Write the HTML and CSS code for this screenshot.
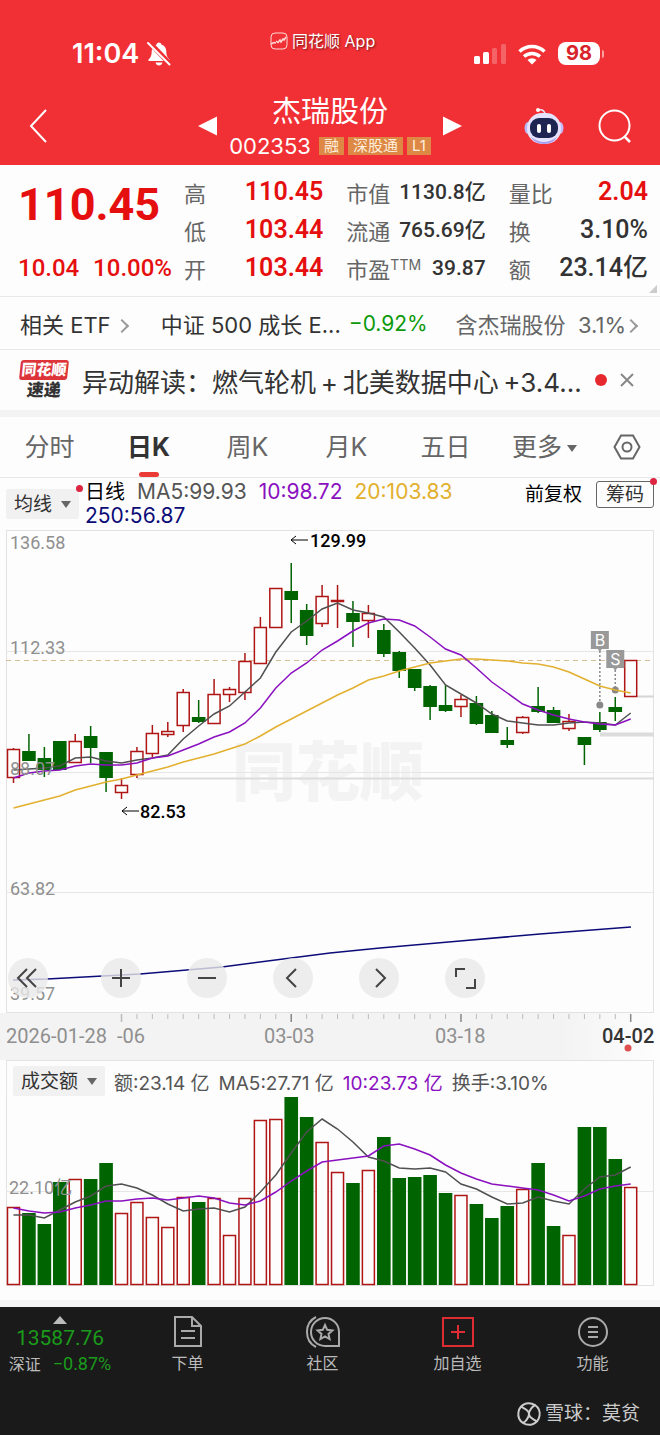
FILE: index.html
```
<!DOCTYPE html>
<html lang="zh-CN">

<head>
  <meta charset="UTF-8" />
  <meta name="viewport" content="width=device-width, initial-scale=1.0">
  <title>杰瑞股份 002353</title>
  <link rel="stylesheet" href="styles.css">
</head>

<body>
  <header class="header">
    <div class="status-bar">
      <div class="clock">
        <span>11:04</span>
        <svg width="24" height="26" viewBox="0 0 24 26">
          <path d="M12 1.500c-1.300 0-2.200.8-2.400 2C6.500 4.500 4.700 7 4.700 10.500c0 4-1 6-3.200 8.100V20h21v-1.400c-2.200-2.100-3.200-4.100-3.200-8.100 0-3.500-1.800-6-4.900-7-.2-1.200-1.100-2-2.400-2zM8.500 21.500h7c-.5 1.800-1.800 3-3.500 3s-3-1.200-3.500-3z" fill="#fff" />
          <path d="M2 1l21 22" stroke="#f13035" stroke-width="5" />
          <path d="M1 2l21.500 21.500" stroke="#fff" stroke-width="2" stroke-linecap="round" />
        </svg>
      </div>
      <div class="app-name">
        <svg width="18" height="18" viewBox="0 0 18 18" fill="none" stroke="#ffd9d6">
          <rect x="1" y="1" width="16" height="16" rx="4" />
          <path d="M1 12l3-1.500 2 .5M6 9l2 1.500L10 8l1 2 2-3 1 1 2-3" stroke-width="1.500" />
        </svg>
        <span>同花顺 App</span>
      </div>
      <div class="signals">
        <svg width="32" height="22" viewBox="0 0 32 22" fill="#fff">
          <rect x="0" y="13" width="6" height="8" rx="1.500" />
          <rect x="9" y="9" width="6" height="12" rx="1.500" />
          <rect x="18" y="5" width="5" height="16" rx="1.500" opacity=".25" />
          <rect x="27" y="1" width="5" height="20" rx="1.500" opacity=".25" />
        </svg>
        <svg width="28" height="22" viewBox="0 0 28 22" fill="none" stroke="#fff" stroke-width="3.500">
          <path d="M1.500 8.500a18 18 0 0 1 25 0" />
          <path d="M6 13.500a12 12 0 0 1 16 0" />
          <path d="M14 21.500l-4.500-4.500a6.500 6.500 0 0 1 9 0z" fill="#fff" stroke="none" />
        </svg>
        <span class="battery">98</span>
      </div>
    </div>
    <div class="title-bar">
      <a class="back" href="#" aria-label="返回">
        <svg width="20" height="34" viewBox="0 0 20 34" fill="none" stroke="#fff" stroke-width="2">
          <path d="M18 1L3 17l15 16" />
        </svg>
      </a>
      <div class="stock">
        <button class="arrow" aria-label="上一只">
          <svg width="19" height="20" viewBox="0 0 20 20"><path d="M20 0v20L0 10z" fill="#fff" /></svg>
        </button>
        <div class="stock-name">
          <h1>杰瑞股份</h1>
          <p><span class="code">002353</span><span class="tag">融</span><span class="tag">深股通</span><span class="tag">L1</span></p>
        </div>
        <button class="arrow" aria-label="下一只">
          <svg width="19" height="20" viewBox="0 0 20 20"><path d="M0 0v20l20-10z" fill="#fff" /></svg>
        </button>
      </div>
      <div class="actions">
        <button aria-label="智能助手">
          <svg width="40" height="38" viewBox="0 0 40 38">
            <path d="M15 3q5-1 6 4" fill="none" stroke="#e8e6fb" stroke-width="1.500" />
            <circle cx="14" cy="3" r="2" fill="#fff" />
            <ellipse cx="4" cy="21" rx="3.500" ry="6" fill="#b9b6f5" />
            <ellipse cx="36" cy="21" rx="3.500" ry="6" fill="#c9b8f8" />
            <rect x="3" y="6" width="34" height="31" rx="15" fill="#e4e2fc" />
            <path d="M7 30q13 10 26 0-4 7-13 7T7 30z" fill="#a99cf0" />
            <rect x="6" y="11" width="28" height="20" rx="9" fill="#1d2550" />
            <rect x="13" y="17" width="4" height="9" rx="2" fill="#fff" />
            <rect x="23" y="17" width="4" height="9" rx="2" fill="#fff" />
          </svg>
        </button>
        <button aria-label="搜索">
          <svg width="34" height="34" viewBox="0 0 34 34" fill="none" stroke="#fff" stroke-width="2">
            <circle cx="16.500" cy="16.500" r="15" />
            <path d="M26 27l6 6" stroke-width="2.500" />
          </svg>
        </button>
      </div>
    </div>
  </header>

  <section class="quote">
    <div class="price">
      <strong>110.45</strong>
      <p><span>10.04</span><span>10.00%</span></p>
    </div>
    <dl class="facts">
      <div><dt>高</dt><dd class="up">110.45</dd></div>
      <div><dt>市值</dt><dd class="small">1130.8亿</dd></div>
      <div><dt>量比</dt><dd class="up">2.04</dd></div>
      <div><dt>低</dt><dd class="up">103.44</dd></div>
      <div><dt>流通</dt><dd class="small">765.69亿</dd></div>
      <div><dt>换</dt><dd>3.10%</dd></div>
      <div><dt>开</dt><dd class="up">103.44</dd></div>
      <div><dt>市盈<sup>TTM</sup></dt><dd class="small">39.87</dd></div>
      <div><dt>额</dt><dd>23.14亿</dd></div>
    </dl>
    <i class="corner"></i>
  </section>

  <section class="etf">
    <a href="#">相关 ETF <i class="chevron"></i></a>
    <span class="etf-name">中证 500 成长 E...</span>
    <span class="down">−0.92%</span>
    <a class="muted" href="#">含杰瑞股份&nbsp; 3.1%<i class="chevron"></i></a>
  </section>

  <section class="news">
    <div class="news-logo"><b>同花顺</b><em>速递</em></div>
    <a href="#">异动解读：燃气轮机&thinsp;+&thinsp;北美数据中心&thinsp;+3.4...</a>
    <span class="dot"></span>
    <button aria-label="关闭">
      <svg width="14" height="14" viewBox="0 0 14 14" stroke="#888" stroke-width="2"><path d="M1 1l12 12M13 1L1 13" /></svg>
    </button>
  </section>

  <nav class="tabs">
    <a href="#">分时</a>
    <a href="#" class="active">日K</a>
    <a href="#">周K</a>
    <a href="#">月K</a>
    <a href="#">五日</a>
    <a href="#">更多<i class="caret"></i></a>
    <button aria-label="设置">
      <svg width="28" height="26" viewBox="0 0 28 26" fill="none" stroke="#666" stroke-width="2">
        <path d="M8 1.500h12L26.500 13 20 24.500H8L1.500 13z" />
        <circle cx="14" cy="13" r="4.500" />
      </svg>
    </button>
  </nav>

  <section class="ma-bar">
    <div class="picker has-dot">
      <select aria-label="主图指标"><option>均线</option></select><i class="caret"></i>
    </div>
    <p class="ma-values">
      <span class="period">日线</span>
      <span class="ma5">MA5:99.93</span>
      <span class="ma10">10:98.72</span>
      <span class="ma20">20:103.83</span>
      <span class="ma250">250:56.87</span>
    </p>
    <span class="adjust">前复权</span>
    <button class="chips">筹码</button>
  </section>

  <section class="kline">
    <svg id="kline" viewBox="0 0 660 483"></svg>
    <div class="tools">
      <button aria-label="最早"><svg viewBox="0 0 40 40"><path d="M19 11l-9 9 9 9M28 11l-9 9 9 9" /></svg></button>
      <button aria-label="放大"><svg viewBox="0 0 40 40"><path d="M20 11v18M11 20h18" /></svg></button>
      <button aria-label="缩小"><svg viewBox="0 0 40 40"><path d="M11 20h18" /></svg></button>
      <button aria-label="左移"><svg viewBox="0 0 40 40"><path d="M23 11l-9 9 9 9" /></svg></button>
      <button aria-label="右移"><svg viewBox="0 0 40 40"><path d="M17 11l9 9-9 9" /></svg></button>
      <button aria-label="全屏"><svg viewBox="0 0 40 40"><path d="M11 19v-8h9M30 21v9h-9" /></svg></button>
    </div>
  </section>
  <svg id="axis" class="axis" viewBox="0 0 660 47"></svg>

  <section class="volume">
    <div class="volume-bar">
      <div class="picker">
        <select aria-label="副图指标"><option>成交额</option></select><i class="caret"></i>
      </div>
      <span>额:23.14 亿</span>
      <span>MA5:27.71 亿</span>
      <span class="ma10">10:23.73 亿</span>
      <span>换手:3.10%</span>
    </div>
    <svg id="volume" viewBox="0 0 660 190"></svg>
  </section>

  <footer class="footer">
    <div class="menu">
      <a class="index" href="#">
        <i class="caret-up"></i>
        <b>13587.76</b>
        <span>深证<em>−0.87%</em></span>
      </a>
      <a href="#">
        <svg width="30" height="32" viewBox="0 0 30 32"><path d="M2 1h17l9 9v20H2zM19 1v9h9M8 15h14M8 22h14" /></svg>
        下单
      </a>
      <a href="#">
        <svg width="34" height="32" viewBox="0 0 34 32">
          <path d="M19 2a14 14 0 0 0 0 28h14V16A14 14 0 0 0 19 2zM10 1C-2 7-2 25 10 31" />
          <path d="M19 9l2.200 4.800 5.200.6-3.900 3.500 1.100 5.200-4.600-2.700-4.600 2.700 1.100-5.200-3.900-3.500 5.200-.6z" />
        </svg>
        社区
      </a>
      <a href="#">
        <svg class="add" width="32" height="32" viewBox="0 0 32 32"><path d="M1 2h30v28H1zM16 9v14M9 16h14" /></svg>
        加自选
      </a>
      <a href="#">
        <svg width="30" height="32" viewBox="0 0 30 32"><circle cx="15" cy="16" r="14" /><path d="M10 11h10M10 16h10M10 21h10" /></svg>
        功能
      </a>
    </div>
    <p class="credit">
      <svg width="24" height="24" viewBox="0 0 24 24" fill="none" stroke="#ccc" stroke-width="2">
        <path d="M9 1.500a11 11 0 0 0-3 19.500c2-1 6-5 6-9S7 7 5 5M15 22.500A11 11 0 0 0 18 3c-2 1-6 5-6 9s5 5 7 7" />
        <path d="M9 1.500q5-1 9 1.500M6 21q4 2.500 9 1.500" />
      </svg>
      雪球：莫贫
    </p>
  </footer>
  <script src="chart.js"></script>
</body>

</html>
```

FILE: styles.css
```
* {
  box-sizing: border-box;
  margin: 0;
  padding: 0;
}

body {
  font-family: Inter, 'Noto Sans CJK SC', sans-serif;
  background-color: #fdfdfd;
  color: #333;
  font-size: 20px;
}

a {
  color: inherit;
  text-decoration: none;
}

button {
  background: none;
  border: none;
  font: inherit;
  color: inherit;
  cursor: pointer;
}

svg {
  display: block;
  overflow: visible;
}

i,
em {
  font-style: normal;
}

/* Header */
.header {
  background: #f13035;
  color: #fff;
  height: 165px;
}

.status-bar {
  display: flex;
  justify-content: space-between;
  align-items: flex-start;
  height: 92px;
  padding: 28px 60px 0 72px;
}

.clock {
  display: flex;
  align-items: center;
  gap: 8px;
  margin-top: 12px;
  font-size: 27px;
  line-height: 28px;
  font-weight: 600;
}

.app-name {
  display: flex;
  align-items: center;
  gap: 4px;
  font-size: 16px;
  line-height: 26px;
  text-shadow: 1px 1px 2px rgba(0, 0, 0, 0.5);
}

.signals {
  display: flex;
  align-items: center;
  gap: 12px;
  margin-top: 14px;
}

.battery {
  position: relative;
  width: 42px;
  background: #fff;
  color: #d8232a;
  border-radius: 8px;
  font-size: 20px;
  line-height: 23px;
  font-weight: 700;
  text-align: center;
}

.battery::after {
  content: '';
  position: absolute;
  top: 8px;
  right: -4px;
  width: 2px;
  height: 8px;
  border-radius: 0 3px 3px 0;
  background: #f9a0a0;
}

.title-bar {
  display: grid;
  grid-template-columns: 1fr auto 1fr;
  align-items: center;
  padding: 0 28px;
}

.stock {
  display: flex;
  align-items: center;
  gap: 12px;
}

.stock-name {
  text-align: center;
}

.stock-name h1 {
  font-size: 29px;
  line-height: 40px;
  font-weight: 400;
}

.stock-name p {
  display: flex;
  align-items: center;
  gap: 4px;
}

.code {
  margin-right: 4px;
  font-size: 22px;
  line-height: 28px;
}

.tag {
  padding: 0 5px;
  background: #dd8844;
  color: #ffeedd;
  font-size: 15px;
  line-height: 18px;
}

.actions {
  display: flex;
  justify-content: flex-end;
  align-items: center;
  gap: 34px;
}

/* Quote */
.quote {
  position: relative;
  display: flex;
  gap: 12px;
  height: 132px;
  padding: 8px 12px 0 18px;
  border-bottom: 1px solid #e8e8e8;
  font-family: Roboto, 'Noto Sans CJK SC', sans-serif;
}

.corner {
  position: absolute;
  right: 3px;
  bottom: 3px;
  border: 4px solid transparent;
  border-right-color: #ccc;
  border-bottom-color: #ccc;
}

.price {
  flex: 154;
  color: #e60f0f;
}

.price strong {
  display: block;
  font-size: 45px;
  line-height: 64px;
}

.price p {
  display: flex;
  justify-content: space-between;
  margin-top: 12px;
  font-size: 24px;
  line-height: 38px;
  font-weight: 500;
}

.facts {
  flex: 464;
  display: grid;
  grid-template-columns: repeat(3, minmax(0, 1fr));
  column-gap: 23px;
  grid-auto-rows: 38px;
}

.facts div {
  display: flex;
  justify-content: space-between;
  align-items: center;
  white-space: nowrap;
}

.facts dt {
  font-size: 22px;
  color: #666;
}

.facts sup {
  font-family: Inter, sans-serif;
  font-size: 14px;
}

.facts dd {
  font-size: 25px;
  line-height: 38px;
  font-weight: 500;
}

.facts .small {
  font-size: 21px;
}

.facts .up {
  font-weight: 600;
}

.up {
  color: #e60f0f;
}

.down {
  color: #0c9a0c;
}

/* ETF and news rows */
.etf {
  display: flex;
  align-items: center;
  height: 53px;
  padding: 0 20px;
  border-bottom: 1px solid #e8e8e8;
  font-size: 22px;
  white-space: nowrap;
}

.etf-name {
  margin-left: 30px;
}

.etf .down {
  margin-left: 8px;
  font-size: 21px;
}

.muted {
  margin-left: auto;
  color: #666;
}

.chevron {
  display: inline-block;
  width: 10px;
  height: 10px;
  margin: 0 4px 2px 0;
  border: solid #999;
  border-width: 2px 2px 0 0;
  transform: rotate(45deg);
}

.news {
  display: flex;
  align-items: center;
  height: 67px;
  padding: 0 26px 0 20px;
  border-bottom: 7px solid #f3f3f3;
  font-size: 26px;
  white-space: nowrap;
}

.news-logo {
  width: 48px;
  margin-right: 14px;
  text-align: center;
  font-size: 15px;
  line-height: 20px;
  font-weight: 900;
}

.news-logo b {
  display: block;
  background: #dd343a;
  border-radius: 3px;
  color: #fff;
  transform: skewX(-6deg);
}

.news-logo em {
  display: block;
  font-size: 17px;
  transform: skewX(-6deg);
}

.news a {
  flex: 1;
}

.dot {
  width: 12px;
  height: 12px;
  margin-right: 13px;
  border-radius: 50%;
  background: #e5292f;
}

/* Tabs */
.tabs {
  display: grid;
  grid-template-columns: repeat(6, 3fr) 2fr;
  height: 61px;
  border-bottom: 1px solid #e8e8e8;
  color: #666;
  font-size: 25px;
  line-height: 60px;
  text-align: center;
}

.tabs a {
  position: relative;
}

.tabs button {
  display: flex;
  align-items: center;
  justify-content: center;
}

.tabs .active {
  color: #333;
  font-weight: 700;
}

.tabs .active::after {
  content: '';
  position: absolute;
  left: 50%;
  bottom: 0;
  width: 20px;
  height: 5px;
  margin-left: -10px;
  border-radius: 3px;
  background: #ea3b36;
}

.caret {
  display: inline-block;
  border: 5px solid transparent;
  border-top: 7px solid #666;
  border-bottom: none;
}

.tabs .caret {
  margin: 0 0 4px 5px;
}

/* Moving average legend */
.ma-bar {
  display: flex;
  align-items: flex-start;
  height: 52px;
  padding: 0 6px;
}

.picker {
  position: relative;
  display: flex;
  align-items: center;
  gap: 8px;
  height: 30px;
  padding: 0 8px;
  background: #f1f1f1;
  border-radius: 2px;
}

.picker select {
  appearance: none;
  background: none;
  border: none;
  color: #333;
  font: inherit;
  font-size: 19px;
}

.ma-bar .picker {
  margin-top: 11px;
}

.has-dot::after,
.chips::after {
  content: '';
  position: absolute;
  top: -4px;
  right: -4px;
  width: 7px;
  height: 7px;
  border-radius: 50%;
  background: #dc2540;
}

.ma-values {
  flex: 1;
  margin: 2px 0 0 6px;
  font-size: 21px;
  line-height: 24px;
  display: flex;
  flex-wrap: wrap;
  column-gap: 12px;
}

.period {
  color: #000;
  font-size: 20px;
}

.ma5 {
  color: #555;
}

.ma10 {
  color: #8a10c0;
}

.ma20 {
  color: #e2b02e;
}

.ma250 {
  color: #0c0c78;
}

.adjust {
  margin: 3px 14px 0 0;
  color: #000;
  font-size: 19px;
  line-height: 28px;
}

.chips {
  position: relative;
  height: 27px;
  margin-top: 3px;
  padding: 0 9px;
  border: 1px solid #666;
  border-radius: 3px;
  font-size: 19px;
  line-height: 24px;
}

/* Charts */
.kline {
  position: relative;
}

.kline text,
.axis text,
.volume text {
  font-family: Roboto, 'Noto Sans CJK SC', sans-serif;
  font-size: 18px;
  fill: #8f8f8f;
}

.kline .mark {
  fill: #000;
  font-weight: 500;
}

.kline .watermark {
  font-size: 64px;
  font-weight: 900;
  fill: #f3f3f3;
}

.kline .flag {
  font-family: Inter, sans-serif;
  font-size: 16px;
  fill: #fff;
}

.axis text {
  font-size: 20px;
}

.axis .last {
  fill: #333;
  font-weight: 500;
}

.axis {
  background: linear-gradient(to right, #f3f3f3 85%, #fdfdfd);
}

.tools {
  position: absolute;
  left: 8px;
  bottom: 15px;
  display: flex;
  gap: 46px;
}

.tools button {
  width: 40px;
  height: 40px;
  border-radius: 50%;
  background: rgba(232, 232, 232, 0.8);
}

.tools button:first-child {
  margin-right: 7px;
}

.tools path {
  fill: none;
  stroke: #444;
  stroke-width: 2;
}

/* Volume */
.volume {
  border-bottom: 7px solid #f3f3f3;
  padding-bottom: 14px;
}

.volume-bar {
  display: flex;
  align-items: center;
  gap: 9px;
  height: 36px;
  margin: 0 6px;
  padding: 5px 6px 0;
  border: 1px solid #e4e4e4;
  border-bottom: none;
  color: #555;
  font-size: 19px;
  white-space: nowrap;
}

.volume-bar .ma10 {
  color: #8a10c0;
}

/* Footer */
.footer {
  height: 128px;
  background: #1a1a1a;
  color: #bbb;
}

.menu {
  display: grid;
  grid-template-columns: 8fr repeat(4, 9fr);
  padding-top: 9px;
  font-size: 16px;
  line-height: 24px;
}

.menu a {
  display: flex;
  flex-direction: column;
  align-items: center;
  gap: 3px;
}

.menu svg {
  fill: none;
  stroke: #aaa;
  stroke-width: 2;
}

.menu .add {
  stroke: #dd2c33;
}

.menu .index {
  gap: 0;
}

.index b,
.index em {
  font-family: Roboto, sans-serif;
  color: #1a9c1a;
}

.index b {
  font-size: 21px;
  line-height: 28px;
  font-weight: 400;
}

.index em {
  margin-left: 12px;
  font-size: 18px;
}

.caret-up {
  border: 7px solid transparent;
  border-top: none;
  border-bottom: 8px solid #bbb;
}

.credit {
  display: flex;
  justify-content: flex-end;
  align-items: center;
  gap: 4px;
  margin-top: 24px;
  padding-right: 20px;
  color: #ccc;
  font-size: 19px;
  line-height: 28px;
}
```

FILE: chart.js
```
const RED = '#b01515';
const GREEN = '#006400';
const GRID = '#e6e6e6';
const STEP = 15.43;
const x = (i) => 13.5 + i * STEP;

// [up, high, body top, body bottom, low]
const candles = [
  [1, 218, 219, 247, 253], [0, 204, 221, 230, 231], [0, 217, 228, 239, 247], [0, 211, 211, 239, 239],
  [1, 204, 211, 232, 232], [0, 196, 206, 217, 233], [0, 222, 222, 247, 262], [1, 248, 255, 262, 269],
  [1, 217, 221, 244, 248], [1, 195, 203, 223, 227], [1, 192, 201, 204, 207], [1, 159, 162, 195, 202],
  [0, 170, 187, 191, 193], [1, 149, 164, 193, 193], [1, 157, 159, 164, 172], [1, 123, 131, 162, 170],
  [1, 87, 97, 133, 133], [1, 58, 58, 97, 97], [0, 33, 61, 69, 93], [0, 74, 80, 105, 115],
  [1, 55, 66, 93, 97], [1, 55, 70, 71, 98], [0, 71, 83, 91, 117], [1, 75, 83, 90, 108],
  [0, 94, 100, 123, 127], [0, 121, 122, 140, 148], [0, 139, 139, 157, 161], [0, 155, 156, 176, 190],
  [0, 155, 175, 180, 182], [1, 165, 169, 176, 187], [0, 166, 173, 193, 195], [0, 181, 185, 202, 202],
  [0, 197, 210, 214, 218], [1, 186, 187, 202, 204], [0, 157, 176, 181, 183], [0, 177, 180, 192, 193],
  [1, 184, 191, 198, 201], [0, 207, 207, 214, 235], [0, 182, 192, 199, 202], [0, 167, 177, 181, 191],
  [1, 130, 130, 166, 166]
];
const ma5 = [240, 239, 238, 236, 228, 227, 231, 233, 230, 228, 225, 209, 196, 184, 176, 162, 148, 122, 102, 91, 79, 73, 80, 83, 87, 102, 118, 135, 155, 164, 173, 184, 191, 193, 195, 195, 193, 192, 193, 195, 183];
const ma10 = [248, 243, 241, 240, 236, 234, 235, 235, 233, 228, 226, 220, 214, 207, 202, 193, 178, 158, 143, 133, 120, 111, 101, 93, 89, 90, 96, 107, 119, 125, 138, 152, 163, 174, 180, 185, 189, 192, 194, 195, 189];
const ma20 = [278, 274, 270, 266, 260, 256, 252, 249, 245, 241, 237, 232, 228, 224, 219, 214, 206, 197, 189, 181, 173, 165, 158, 150, 146, 141, 137, 133, 131, 129, 129, 130, 131, 133, 134, 137, 142, 149, 156, 160, 163];

const volumes = [111, 117, 128, 86, 83, 83, 67, 117, 106, 121, 131, 101, 106, 102, 139, 102, 24, 23, 1, 21, 46, 76, 87, 74, 41, 82, 81, 79, 97, 99, 108, 122, 110, 93, 67, 130, 139, 31, 31, 63, 91];
const vol5 = [119, 119, 122, 114, 106, 100, 90, 88, 92, 99, 108, 115, 113, 112, 116, 111, 96, 79, 57, 36, 23, 33, 46, 61, 65, 72, 73, 72, 76, 88, 93, 101, 108, 107, 101, 105, 108, 93, 81, 79, 71];
const vol10 = [112, 115, 117, 116, 112, 109, 105, 105, 103, 102, 104, 102, 100, 102, 107, 109, 105, 96, 85, 75, 66, 64, 62, 60, 50, 48, 53, 59, 69, 77, 83, 88, 90, 92, 94, 99, 105, 100, 93, 90, 88];

function line(x1, y1, x2, y2, color, width = 1, extra = '') {
  return `<line x1="${x1}" y1="${y1}" x2="${x2}" y2="${y2}" stroke="${color}" stroke-width="${width}" ${extra}/>`;
}

function curve(values, color) {
  const points = values.map((v, i) => `${x(i)},${v}`).join(' ');
  return `<polyline points="${points}" fill="none" stroke="${color}" stroke-width="1.5"/>`;
}

function text(tx, ty, str, cls = '') {
  return `<text x="${tx}" y="${ty}" class="${cls}">${str}</text>`;
}

function box(i, top, bottom, up) {
  return up
    ? `<rect x="${x(i) - 6}" y="${top + 0.5}" width="12" height="${bottom - top}" fill="#fdfdfd" stroke="${RED}" stroke-width="1.5"/>`
    : `<rect x="${x(i) - 6.8}" y="${top}" width="13.6" height="${bottom - top + 1}" fill="${GREEN}"/>`;
}

function leftArrow(ax, ay) {
  return `<path d="M${ax + 17} ${ay}H${ax}M${ax + 5} ${ay - 4}L${ax} ${ay}l5 4" fill="none" stroke="#000"/>`;
}

function drawKline() {
  let out = `<rect x="6.5" y=".5" width="647" height="482" fill="none" stroke="#e2e2e2"/>`;
  out += text(232, 265, '同花顺', 'watermark');
  [121.5, 242.5, 362.5].forEach((y) => { out += line(6, y, 654, y, GRID); });
  out += line(137, 248.5, 654, 248.5, '#dcdcdc', 2);
  out += line(637, 166.5, 654, 166.5, '#d5d5d5', 2);
  out += line(600, 204.5, 654, 204.5, '#dcdcdc', 4);
  out += line(6, 130.5, 654, 130.5, '#d8bd92', 1, 'stroke-dasharray="5 4"');

  candles.forEach(([up, high, top, bottom, low], i) => {
    out += line(x(i), high, x(i), low, up ? RED : GREEN, 1.5);
    out += box(i, top, bottom, up);
  });

  // buy and sell flags
  [['B', 38, 101, 175], ['S', 39, 120, 160]].forEach(([name, i, y, end]) => {
    out += line(x(i), y + 20, x(i), end, '#888', 1.5, 'stroke-dasharray="2 2"');
    out += `<circle cx="${x(i)}" cy="${end}" r="3.5" fill="#888"/>`;
    out += `<path d="M${x(i) - 9} ${y}h18v18h-7l-2 3-2-3h-7z" fill="#999"/>`;
    out += text(x(i) - 5, y + 15, name, 'flag');
  });

  out += curve(ma5, '#505050') + curve(ma20, '#e2b02e') + curve(ma10, '#8a10c0');
  out += '<path d="M13 450L47 449 140 444 222 437 291 428 330 423 380 418 460 411 540 404 631 397" fill="none" stroke="#0c0c78" stroke-width="1.5"/>';

  out += text(10, 19, '136.58') + text(10, 124, '112.33') + text(10, 245, '88.07');
  out += text(10, 365, '63.82') + text(10, 470, '39.57');
  out += leftArrow(291, 10) + text(310, 17, '129.99', 'mark');
  out += leftArrow(122, 281) + text(140, 288, '82.53', 'mark');
  document.getElementById('kline').innerHTML = out;
}

function drawAxis() {
  let out = '';
  for (let i = 7; i <= 40; i++) {
    const major = (i - 7) % 11 === 0;
    out += line(x(i), 1, x(i), major ? 9 : 6, major && i > 7 ? '#888' : '#bbb', major ? 1.5 : 1);
  }
  out += text(6, 30, '2026-01-28') + text(117, 30, '-06') + text(264, 30, '03-03');
  out += text(435, 30, '03-18') + text(602, 30, '04-02', 'last');
  out += '<circle cx="628" cy="35" r="3.5" fill="#de5050"/>';
  document.getElementById('axis').innerHTML = out;
}

function drawVolume() {
  let out = '<path d="M6.5 0v189.5h647V0" fill="none" stroke="#e2e2e2"/>';
  out += line(6, 95.5, 654, 95.5, GRID);
  volumes.forEach((top, i) => { out += box(i, top, 188, candles[i][0]); });
  out += text(9, 98, '22.10亿');
  out += curve(vol5, '#505050') + curve(vol10, '#8a10c0');
  document.getElementById('volume').innerHTML = out;
}

drawKline();
drawAxis();
drawVolume();
```
